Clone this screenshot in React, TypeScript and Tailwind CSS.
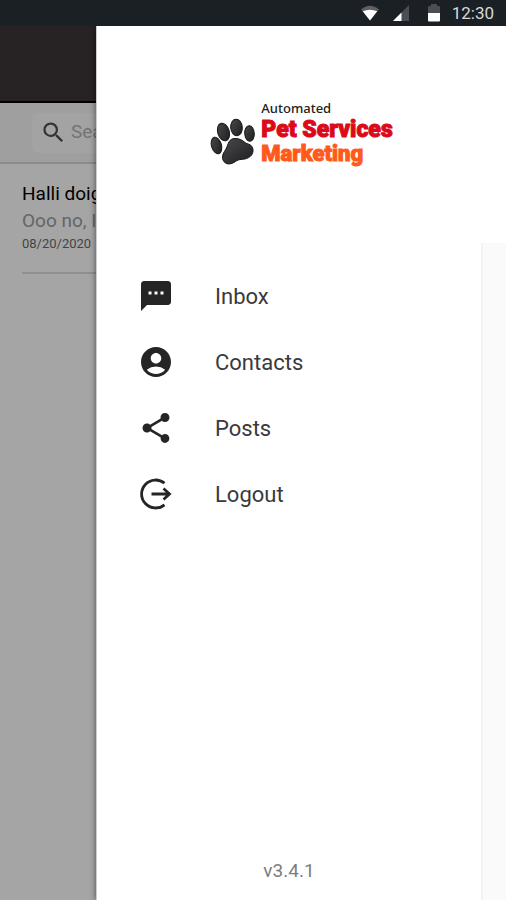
import type { ReactNode } from "react";
import { MdAccountCircle, MdSearch, MdShare, MdSms } from "react-icons/md";

interface MenuItem {
  label: string;
  icon: ReactNode;
}

const LogoutIcon = () => (
  <svg viewBox="0 0 36 36" className="w-9 h-9" fill="none" stroke="currentColor" strokeWidth="2.8">
    <path d="M26.5 7.2A14 14 0 1 0 26.5 28.8" />
    <path d="M13.5 18H31.5M25.5 12.5L31.5 18L25.5 23.5" />
  </svg>
);

const menuItems: MenuItem[] = [
  { label: "Inbox", icon: <MdSms className="w-9 h-9" /> },
  { label: "Contacts", icon: <MdAccountCircle className="w-9 h-9" /> },
  { label: "Posts", icon: <MdShare className="w-9 h-9" /> },
  { label: "Logout", icon: <LogoutIcon /> },
];

const StatusBar = () => (
  <div className="relative z-20 flex h-[26px] items-center justify-end bg-[#1b2025] pr-3 text-white">
    <svg viewBox="0 0 20 16" className="mr-3 h-4 w-5">
      <path d="M1 4.5Q10-3 19 4.5L10 15.5Z" fill="#5c6064" />
      <path d="M2.8 6.2Q10 3.2 17.2 6.2L10 15.5Z" fill="#fff" />
    </svg>
    <svg viewBox="0 0 18 18" className="mr-[18px] h-[18px] w-[18px]">
      <path d="M17 1V17H1Z" fill="#4b4f53" />
      <path d="M9.5 8.5V17H1Z" fill="#fff" />
    </svg>
    <svg viewBox="0 0 12 18" className="mr-3 h-[18px] w-3">
      <path d="M0 9V3Q0 2 1 2H3V0H9V2H11Q12 2 12 3V9Z" fill="#4b4f53" />
      <path d="M0 9H12V16.5Q12 17.5 11 17.5H1Q0 17.5 0 16.5Z" fill="#fff" />
    </svg>
    <span className="text-[17px] leading-none text-[#d8d9da]">12:30</span>
  </div>
);

const Paw = () => (
  <svg viewBox="0 0 46 48" className="h-12 w-[46px]">
    <defs>
      <linearGradient id="paw" x1="0" y1="0" x2="1" y2="1">
        <stop offset="0" stopColor="#4a4a4c" />
        <stop offset="1" stopColor="#1d1d1f" />
      </linearGradient>
    </defs>
    <g fill="url(#paw)" stroke="#161616" strokeWidth="1">
      <ellipse cx="6.5" cy="27.5" rx="5" ry="8.5" transform="rotate(-16 6.5 27.5)" />
      <ellipse cx="13.5" cy="14" rx="5.8" ry="9" transform="rotate(-16 13.5 14)" />
      <ellipse cx="26.5" cy="9.5" rx="5.8" ry="8.3" transform="rotate(-5 26.5 9.5)" />
      <ellipse cx="39.5" cy="15.5" rx="4.8" ry="7.8" transform="rotate(-4 39.5 15.5)" />
      <path d="M25 20.5C18.5 20.5 18.5 26 16 31C13.5 35 11.5 37.5 13 42C15.5 47.5 21.5 46.5 25.5 43.5C29.5 40.5 32.5 42 36.5 40.5C42.5 38.5 44 33.5 42.5 29.5C40.5 25.5 37.5 26.5 35 24.5C32 22 29.5 20.5 25 20.5Z" />
    </g>
  </svg>
);

const Logo = () => (
  <div className="flex items-end justify-center gap-[5px]">
    <Paw />
    <div className="whitespace-nowrap">
      <div className="font-['Noto_Sans'] text-[13px] leading-5 font-medium text-[#222]">Automated</div>
      <div className="text-[23px] leading-6 font-black text-[#dc0a19] [-webkit-text-stroke:1px_#dc0a19]">
        Pet Services
      </div>
      <div className="text-[22px] leading-6 font-black text-[#ff5a1c] [-webkit-text-stroke:1px_#ff5a1c]">
        Marketing
      </div>
    </div>
  </div>
);

const InboxPage = () => (
  <div className="flex-1 bg-[#a5a5a5]">
    <header className="h-[77px] border-b-2 border-black bg-[#272324]" />
    <div className="flex h-[61px] items-center border-b-2 border-[#8b8b8b] bg-[#9f9f9f] pl-8">
      <label className="flex h-10 flex-1 items-center gap-1 rounded-md bg-[#a3a3a3] pl-2">
        <MdSearch className="h-[27px] w-[27px] shrink-0 text-[#333]" />
        <input
          type="search"
          aria-label="Search"
          placeholder="Search"
          className="w-full bg-transparent text-[19px] outline-none placeholder:text-[#737373]"
        />
      </label>
    </div>
    <article className="ml-[22px] border-b-2 border-[#8f8f8f] pt-4 pb-[18px] whitespace-nowrap">
      <h2 className="text-[19px] leading-7 text-black">Halli doigs</h2>
      <p className="text-[19px] leading-[26px] text-[#656565]">Ooo no, I</p>
      <p className="text-[13px] leading-5 text-[#444]">08/20/2020</p>
    </article>
  </div>
);

const Drawer = () => (
  <nav className="absolute top-[26px] right-0 bottom-0 left-24 z-10 flex flex-col border-l border-[#ccc] bg-white shadow-[0_0_6px_rgba(0,0,0,0.55)]">
    <div className="h-[217px] pt-[72px]">
      <Logo />
    </div>
    <div className="flex flex-1">
      <div className="flex flex-1 flex-col pt-5">
        <ul>
          {menuItems.map((item) => (
            <li key={item.label}>
              <button className="flex h-[66px] w-full items-center gap-[41px] pl-[41px] text-left text-[22px] text-[#3a3a3a]">
                <span className="text-[#252525]">{item.icon}</span>
                {item.label}
              </button>
            </li>
          ))}
        </ul>
        <p className="mt-auto pb-[15px] text-center text-[19px] leading-7 text-[#7d7d7d]">v3.4.1</p>
      </div>
      <div className="w-[25px] border-l-2 border-[#f3f3f3] bg-[#fafafa]" />
    </div>
  </nav>
);

export default function App() {
  return (
    <div className="relative flex min-h-screen flex-col overflow-hidden bg-white font-[Roboto,sans-serif]">
      <StatusBar />
      <InboxPage />
      <Drawer />
    </div>
  );
}
